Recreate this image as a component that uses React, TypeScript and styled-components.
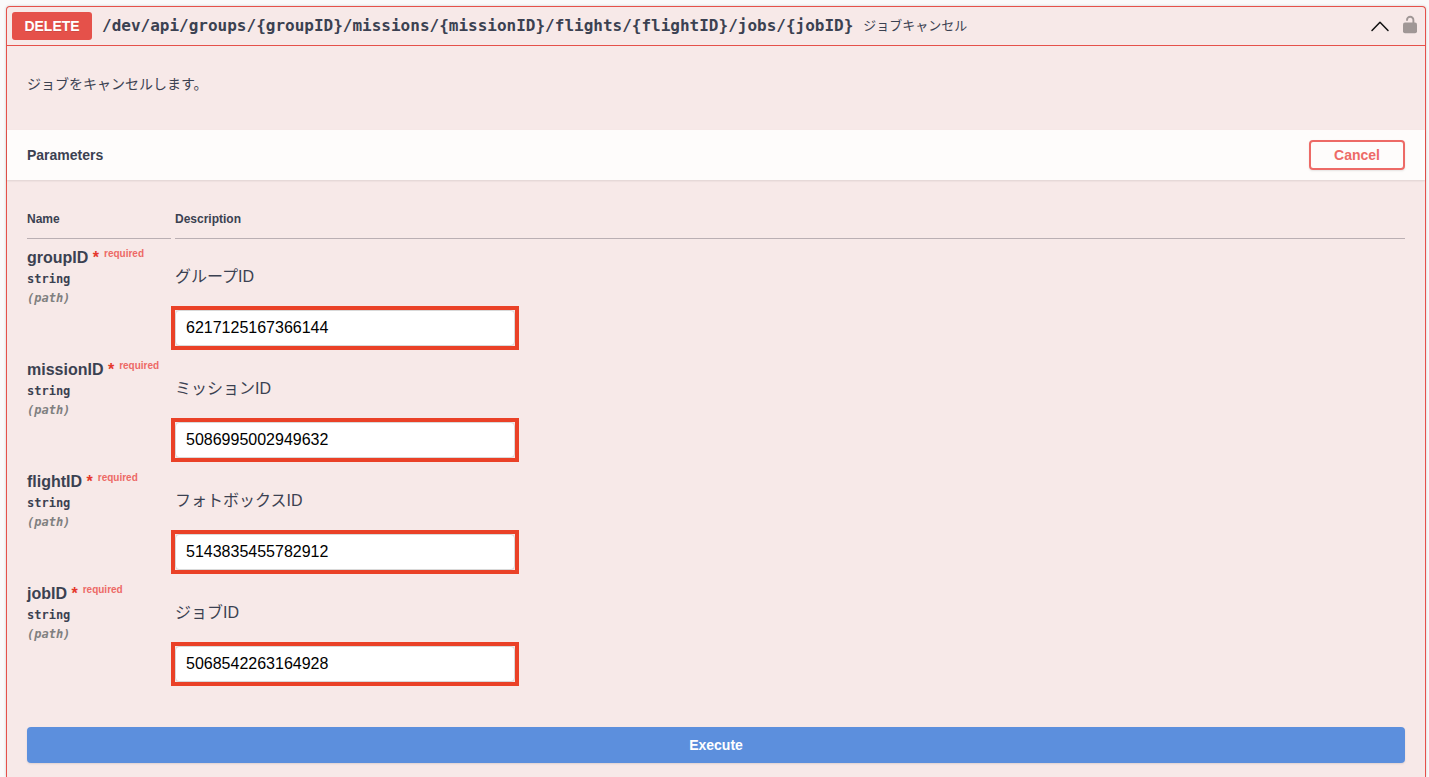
import React from "react";
import styled, { createGlobalStyle } from "styled-components";

const colors = {
  danger: "#e5514a",
  panel: "#f7e9e8",
  text: "#3b4151",
  salmon: "#ed6a66",
  mark: "#ea4127",
  execute: "#5c8fdd",
};

const sans = `"Liberation Sans", "Noto Sans CJK JP", sans-serif`;
const mono = `"DejaVu Sans Mono", "Noto Sans CJK JP", monospace`;

const GlobalStyle = createGlobalStyle`
  *, *::before, *::after { box-sizing: border-box; }
  body {
    margin: 0;
    background: #fafafa;
    color: ${colors.text};
    font-family: ${sans};
  }
`;

const Page = styled.main`
  min-height: 100vh;
  display: flex;
  flex-direction: column;
  padding: 6px 3px 0 6px;
`;

const Operation = styled.section`
  flex: 1;
  border: 1px solid ${colors.danger};
  border-bottom: 0;
  border-radius: 4px 4px 0 0;
  background: ${colors.panel};
  box-shadow: 0 0 3px rgba(0, 0, 0, 0.19);
`;

const Summary = styled.header`
  display: flex;
  align-items: center;
  height: 39px;
  padding: 0 7px 0 5px;
  border-bottom: 1px solid ${colors.danger};
`;

const Method = styled.span`
  width: 80px;
  height: 28px;
  border-radius: 3px;
  background: ${colors.danger};
  color: #fff;
  font-size: 14px;
  font-weight: 700;
  line-height: 28px;
  text-align: center;
  text-shadow: 0 1px 0 rgba(0, 0, 0, 0.1);
`;

const Path = styled.span`
  padding: 0 10px;
  font-family: ${mono};
  font-size: 16px;
  font-weight: 700;
  line-height: 20px;
  white-space: nowrap;
`;

const SummaryText = styled.span`
  flex: 1;
  font-size: 13px;
  line-height: 20px;
`;

const IconButton = styled.button`
  display: flex;
  padding: 0;
  margin-left: 12px;
  border: 0;
  background: none;
`;

const Description = styled.p`
  height: 84px;
  margin: 0;
  padding: 28px 20px;
  font-size: 14px;
  line-height: 20px;
`;

const SectionBar = styled.div`
  display: flex;
  align-items: center;
  justify-content: space-between;
  height: 50px;
  padding: 0 20px;
  background: #fefcfb;
  box-shadow: 0 1px 2px rgba(0, 0, 0, 0.1);
`;

const SectionTitle = styled.h4`
  margin: 0;
  font-size: 14px;
  line-height: 20px;
`;

const CancelButton = styled.button`
  width: 96px;
  height: 30px;
  padding: 0;
  border: 2px solid ${colors.salmon};
  border-radius: 4px;
  background: transparent;
  box-shadow: 0 1px 2px rgba(0, 0, 0, 0.1);
  color: ${colors.salmon};
  font-family: ${sans};
  font-size: 14px;
  font-weight: 700;
`;

const TableArea = styled.div`
  padding: 20px 16px 40px;
`;

const Table = styled.table`
  width: 100%;
  table-layout: fixed;
  border-spacing: 4px 0;
`;

const HeadCell = styled.th<{ $width?: string }>`
  width: ${({ $width }) => $width ?? "auto"};
  height: 39px;
  padding: 0 0 1px;
  border-bottom: 1px solid #baafb3;
  font-size: 12px;
  line-height: 16px;
  text-align: left;
`;

const Cell = styled.td`
  height: 112px;
  padding: 8px 0 0;
  vertical-align: top;
  white-space: nowrap;
`;

const ParamName = styled.label`
  display: block;
  font-size: 16px;
  font-weight: 700;
  line-height: 22px;
`;

const Star = styled.span`
  color: #e5382c;
`;

const Required = styled.span`
  margin-left: 5px;
  color: ${colors.salmon};
  font-size: 10px;
  vertical-align: 6px;
  line-height: 10px;
`;

const ParamType = styled.div`
  font-family: ${mono};
  font-size: 12px;
  font-weight: 700;
  line-height: 20px;
`;

const ParamIn = styled(ParamType)`
  color: #808080;
  font-style: italic;
  line-height: 18px;
`;

const ParamDescription = styled.p`
  margin: 0 0 17px;
  padding-top: 18px;
  font-size: 16px;
  line-height: 24px;
`;

const InputFrame = styled.div`
  width: 348px;
  height: 44px;
  margin-left: -4px;
  border: 4px solid ${colors.mark};
`;

const TextInput = styled.input`
  display: block;
  width: 100%;
  height: 100%;
  padding: 0 10px;
  border: 1px solid #d9d9d9;
  border-radius: 4px;
  background: #fff;
  color: #000;
  font-family: ${sans};
  font-size: 16px;
  outline: 0;
`;

const Actions = styled.div`
  padding: 0 20px 14px;
`;

const ExecuteButton = styled.button`
  display: block;
  width: 100%;
  height: 36px;
  border: 0;
  border-radius: 4px;
  background: ${colors.execute};
  box-shadow: 0 1px 2px rgba(0, 0, 0, 0.1);
  color: #fff;
  font-family: ${sans};
  font-size: 14px;
  font-weight: 700;
`;

const params = [
  { name: "groupID", description: "グループID", value: "6217125167366144" },
  { name: "missionID", description: "ミッションID", value: "5086995002949632" },
  { name: "flightID", description: "フォトボックスID", value: "5143835455782912" },
  { name: "jobID", description: "ジョブID", value: "5068542263164928" },
];

const ChevronUp = () => (
  <svg width="20" height="20" viewBox="0 0 20 20" fill="none" aria-hidden="true">
    <path d="M2 14.5 10 6.2l8 8.3" stroke="#111" strokeWidth="1.5" strokeLinecap="round" strokeLinejoin="round" />
  </svg>
);

const Unlocked = () => (
  <svg width="16" height="22" viewBox="0 0 16 22" aria-hidden="true">
    <path d="M5 5.2V4.4a3.2 3.2 0 0 1 6.4 0V8" transform="translate(0 .6)" fill="none" stroke="#a09796" strokeWidth="1.9" />
    <rect x="1" y="7.4" width="14" height="10.8" rx="2" fill="#a09796" />
  </svg>
);

export default function App() {
  return (
    <>
      <GlobalStyle />
      <Page>
        <Operation>
          <Summary>
            <Method>DELETE</Method>
            <Path>/dev/api/groups/&#123;groupID&#125;/missions/&#123;missionID&#125;/flights/&#123;flightID&#125;/jobs/&#123;jobID&#125;</Path>
            <SummaryText>ジョブキャンセル</SummaryText>
            <IconButton type="button" aria-label="Collapse operation">
              <ChevronUp />
            </IconButton>
            <IconButton type="button" aria-label="Authorization">
              <Unlocked />
            </IconButton>
          </Summary>
          <Description>ジョブをキャンセルします。</Description>
          <SectionBar>
            <SectionTitle>Parameters</SectionTitle>
            <CancelButton type="button">Cancel</CancelButton>
          </SectionBar>
          <TableArea>
            <Table>
              <thead>
                <tr>
                  <HeadCell $width="144px">Name</HeadCell>
                  <HeadCell>Description</HeadCell>
                </tr>
              </thead>
              <tbody>
                {params.map((param) => (
                  <tr key={param.name}>
                    <Cell>
                      <ParamName htmlFor={param.name}>
                        {param.name} <Star>*</Star>
                        <Required>required</Required>
                      </ParamName>
                      <ParamType>string</ParamType>
                      <ParamIn>(path)</ParamIn>
                    </Cell>
                    <Cell>
                      <ParamDescription>{param.description}</ParamDescription>
                      <InputFrame>
                        <TextInput id={param.name} type="text" defaultValue={param.value} />
                      </InputFrame>
                    </Cell>
                  </tr>
                ))}
              </tbody>
            </Table>
          </TableArea>
          <Actions>
            <ExecuteButton type="button">Execute</ExecuteButton>
          </Actions>
        </Operation>
      </Page>
    </>
  );
}
